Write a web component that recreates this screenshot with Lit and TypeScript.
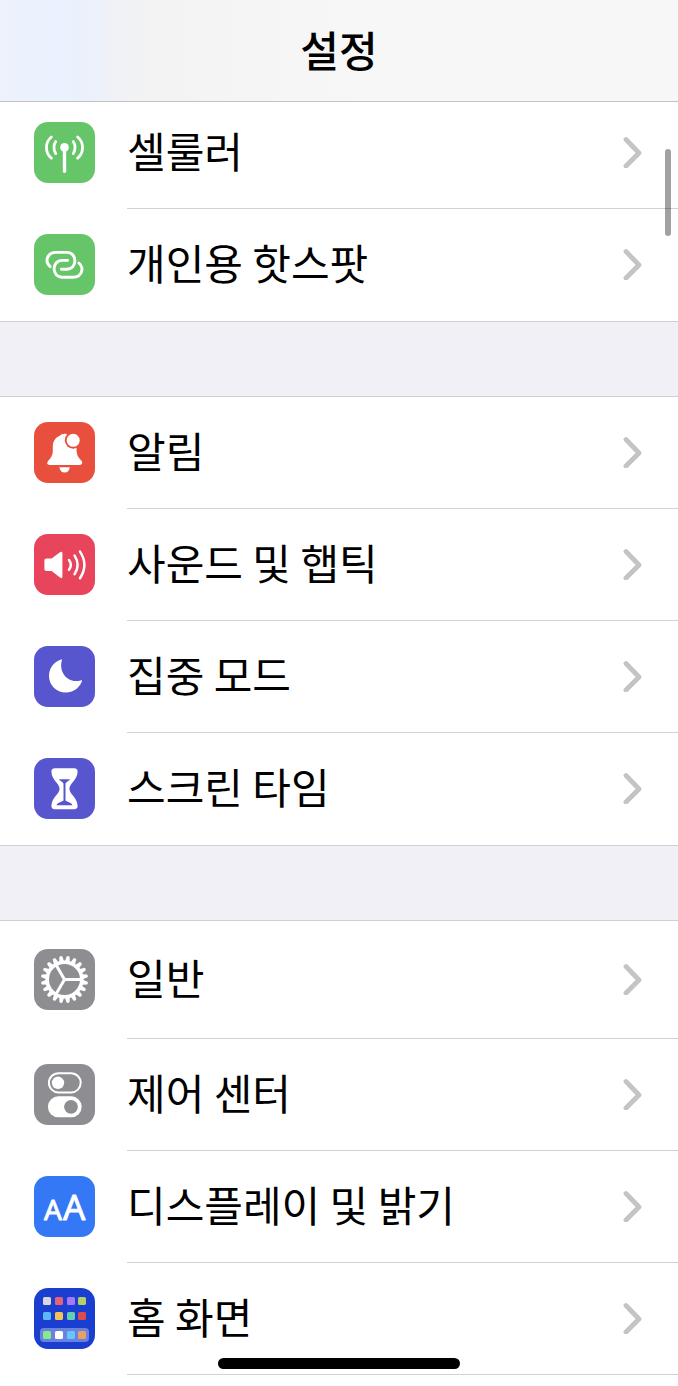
import { LitElement, html, svg, css, type SVGTemplateResult } from "lit";
import { customElement, property } from "lit/decorators.js";

type IconName =
  | "cellular" | "hotspot" | "bell" | "sound" | "moon"
  | "hourglass" | "gear" | "toggles" | "display" | "home";

interface Item {
  icon: IconName;
  label: string;
  tall?: boolean;
}

const GROUPS: Item[][] = [
  [
    { icon: "cellular", label: "셀룰러" },
    { icon: "hotspot", label: "개인용 핫스팟" },
  ],
  [
    { icon: "bell", label: "알림" },
    { icon: "sound", label: "사운드 및 햅틱" },
    { icon: "moon", label: "집중 모드" },
    { icon: "hourglass", label: "스크린 타임" },
  ],
  [
    { icon: "gear", label: "일반", tall: true },
    { icon: "toggles", label: "제어 센터" },
    { icon: "display", label: "디스플레이 및 밝기" },
    { icon: "home", label: "홈 화면" },
  ],
];

const TEETH = Array.from({ length: 20 }, (_, i) => i * 18 + 9);
const SPOKES = [0, 120, 240];

const APP_COLORS = [
  ["#d5d9dc", "#e4637a", "#a678fa", "#b2d068"],
  ["#5cb6fa", "#f2c457", "#66ceb0", "#db4d4d"],
  ["#84ea8a", "#ffffff", "#66c8fa", "#e9a063"],
];
const APP_X = [9, 21, 33, 44];
const APP_Y = [9, 24, 43];

const GLYPHS: Record<IconName, SVGTemplateResult> = {
  cellular: svg`
    <g fill="none" stroke="#fff" stroke-width="2.8" stroke-linecap="round">
      <path d="M30.5 26V49.3" stroke-width="3.4"/>
      <path d="M21.7 19.6C19.4 22.6 19.4 28.6 21.7 31.6M39.3 19.6C41.6 22.6 41.6 28.6 39.3 31.6"/>
      <path d="M17.4 15C10.8 20.2 10.8 31 17.4 36.2M43.6 15C50.2 20.2 50.2 31 43.6 36.2"/>
    </g>
    <circle cx="30.5" cy="25.4" r="4.3" fill="#fff"/>`,
  hotspot: svg`
    <g fill="none" stroke="#fff" stroke-width="2.9" stroke-linecap="round">
      <path d="M16.2 32.6C9.8 27 14 18.4 21.6 18.4H32.8C43.6 18.4 43.6 35.2 32.8 35.2H27.4"/>
      <path d="M44.8 29C51.2 34.6 47 43.2 39.4 43.2H28.2C17.4 43.2 17.4 26.4 28.2 26.4H33.6"/>
    </g>`,
  bell: svg`
    <path fill="#fff" d="M30 12C28 11.6 26.6 12.4 26 13.8C20.8 15.6 18.8 20 18.8 25V29C18.8 33.4 17 35.6 14.4 38.6C12.4 41 13.2 43 15.6 43H45.8C48.4 43 49 40.8 47.2 38.6C44.8 35.8 42.8 33.6 42.6 29L42.4 24L34 12.6C33 11.8 31.4 11.6 30 12Z"/>
    <circle cx="39.2" cy="18.3" r="8.4" fill="#e8503d"/>
    <circle cx="39.2" cy="18.3" r="6.5" fill="#fff"/>
    <path fill="#fff" d="M25.4 45.2H35.8C35.4 48.6 33.4 50.6 30.6 50.6S25.8 48.6 25.4 45.2Z"/>`,
  sound: svg`
    <path fill="#fff" d="M12.6 24.6H17.6L26 18.2C27.4 17.2 28.4 17.6 28.4 19V42.8C28.4 44.4 27.4 44.6 26 43.6L17.6 37H12.6C11.2 37 10.4 36.2 10.4 34.8V26.8C10.4 25.4 11.2 24.6 12.6 24.6Z"/>
    <g fill="none" stroke="#fff" stroke-width="2.5" stroke-linecap="round">
      <path d="M35 26Q38.6 30.8 35 35.8"/>
      <path d="M40.6 21.6Q46.6 30.8 40.6 40.2"/>
      <path d="M46 17.6Q54.8 30.8 46 44.2"/>
    </g>`,
  moon: svg`
    <path fill="#fff" d="M26.8 13.6C27.8 13.2 28.2 13.8 27.8 14.8C24.6 26 33.6 38 46.6 34.4C47.8 34 48.4 34.4 47.8 35.6C45.2 42.4 39 46.6 31.8 46.6C22.4 46.6 15 39.2 15 30C15 22.4 19.8 16.2 26.8 13.6Z"/>`,
  hourglass: svg`
    <path fill="#fff" d="M20.8 10.3H40.2C42.4 10.3 43.8 11.6 43.6 13.8C43.2 22.4 35.4 25.6 35.4 30.8S43.2 39.2 43.6 47.8C43.8 50 42.4 51.3 40.2 51.3H20.8C18.6 51.3 17.2 50 17.4 47.8C17.8 39.2 25.6 36 25.6 30.8S17.8 22.4 17.4 13.8C17.2 11.6 18.6 10.3 20.8 10.3Z"/>
    <path fill="#5856ce" d="M25 21.2H36C35.4 22.6 32.6 23.8 31.5 25.4V42.6C33.4 44.2 37.8 44.6 38.4 47.2H22.6C23.2 44.6 27.6 44.2 29.5 42.6V25.4C28.4 23.8 25.6 22.6 25 21.2Z"/>`,
  gear: svg`
    <circle cx="30.5" cy="30.5" r="17.3" fill="none" stroke="#fff" stroke-width="3.6"/>
    <g fill="#fff">
      ${TEETH.map((a) => svg`<path transform=${`rotate(${a} 30.5 30.5)`} d="M28 12.6L29 7.4Q30.5 6.2 32 7.4L33 12.6Z"/>`)}
    </g>
    <g stroke="#fff" stroke-width="3">
      ${SPOKES.map((a) => svg`<path transform=${`rotate(${a} 30.5 30.5)`} d="M30.5 30.5H47"/>`)}
    </g>`,
  toggles: svg`
    <rect x="14.9" y="9.2" width="31.8" height="19.2" rx="9.6" fill="none" stroke="#fff" stroke-width="2"/>
    <circle cx="24" cy="18.8" r="6.2" fill="#fff"/>
    <rect x="13.9" y="32.3" width="33.8" height="21" rx="10.5" fill="#fff"/>
    <circle cx="37" cy="42.8" r="6.9" fill="#8e8d92"/>`,
  display: svg`
    <g fill="#fff" stroke="#fff" stroke-width="0.8" stroke-linejoin="round" font-family="Noto Sans, sans-serif">
      <text x="10" y="44" font-size="28">A</text>
      <text x="29" y="44" font-size="35">A</text>
    </g>`,
  home: svg`
    <rect x="6" y="40" width="49" height="14" rx="4" fill="#fff" opacity=".35"/>
    ${APP_COLORS.map((row, r) =>
      row.map((c, i) => svg`<rect x=${APP_X[i]} y=${APP_Y[r]} width="8" height="8" rx="1.6" fill=${c}/>`)
    )}`,
};

@customElement("settings-row")
export class SettingsRow extends LitElement {
  @property() icon: IconName = "gear";
  @property() label = "";
  @property({ type: Boolean, reflect: true }) tall = false;

  static styles = css`
    :host {
      display: block;
    }
    .row {
      display: flex;
      align-items: center;
      gap: 32px;
      height: 112px;
      padding-left: 34px;
      color: #000;
      text-decoration: none;
    }
    :host([tall]) .row {
      height: 118px;
    }
    .tile {
      flex: none;
      display: block;
      width: 61px;
      height: 61px;
      margin-bottom: 2px;
      border-radius: 14px;
    }
    .cellular, .hotspot { background: #66c569; }
    .bell { background: #e8503d; }
    .sound { background: #e8445c; }
    .moon, .hourglass { background: #5856ce; }
    .gear, .toggles { background: #8e8d92; }
    .display { background: #3478f6; }
    .home { background: #1a3fd0; }
    .body {
      flex: 1;
      min-width: 0;
      align-self: stretch;
      box-sizing: border-box;
      display: flex;
      align-items: center;
      justify-content: space-between;
      padding-right: 36px;
      border-bottom: 1px solid #d2d2d4;
    }
    :host([data-last]) .body {
      border-bottom-color: transparent;
    }
    .label {
      padding-bottom: 6px;
      font-size: 42px;
      line-height: 60px;
      white-space: nowrap;
    }
    .chevron {
      flex: none;
      display: block;
      width: 20px;
      height: 32px;
      margin-bottom: 2px;
    }
  `;

  render() {
    return html`
      <a class="row" href="#">
        <svg class="tile ${this.icon}" viewBox="0 0 61 61" aria-hidden="true">${GLYPHS[this.icon]}</svg>
        <span class="body">
          <span class="label">${this.label}</span>
          <svg class="chevron" viewBox="0 0 20 32" aria-hidden="true">
            <path d="M4 3.5L17 17L4 30" fill="none" stroke="#c4c4c6" stroke-width="4.8" stroke-linecap="round" stroke-linejoin="round"/>
          </svg>
        </span>
      </a>
    `;
  }
}

@customElement("app-root")
export class AppRoot extends LitElement {
  static styles = css`
    :host {
      display: flex;
      flex-direction: column;
      min-height: 100vh;
      background: #fff;
      font-family: "Noto Sans CJK KR", sans-serif;
      color: #000;
    }
    .bar {
      position: sticky;
      top: 0;
      z-index: 1;
      box-sizing: border-box;
      height: 102px;
      display: flex;
      align-items: center;
      justify-content: center;
      border-bottom: 1px solid #c3c3c5;
      background: linear-gradient(90deg, #edf2fc 0, #e9f2fe 9%, #ebf1fb 13%, #f1f2f5 18%, #f3f3f3 24%, #f7f7f7 52%, #f7f7f7 100%);
    }
    .title {
      margin: 0;
      padding-bottom: 4px;
      font-size: 42px;
      line-height: 60px;
      font-weight: 500;
    }
    .list {
      flex: 1;
      display: flex;
      flex-direction: column;
      gap: 74px;
      margin-top: -6px;
      background: #f0f0f6;
    }
    .group {
      background: #fff;
      border-top: 1px solid #d0d0d4;
      border-bottom: 1px solid #d0d0d4;
    }
    .group:last-child {
      flex: 1;
      border-bottom: 0;
    }
    .scroll {
      position: fixed;
      z-index: 2;
      top: 149px;
      right: 7px;
      width: 6px;
      height: 87px;
      border-radius: 3px;
      background: rgba(0, 0, 0, 0.37);
    }
    .indicator {
      position: fixed;
      z-index: 2;
      bottom: 17px;
      left: 50%;
      width: 242px;
      height: 11px;
      border-radius: 6px;
      background: #000;
      transform: translateX(-50%);
    }
  `;

  render() {
    return html`
      <header class="bar"><h1 class="title">설정</h1></header>
      <main class="list">
        ${GROUPS.map(
          (items, g) => html`
            <section class="group">
              ${items.map(
                (it, i) => html`<settings-row
                  .icon=${it.icon}
                  .label=${it.label}
                  ?tall=${!!it.tall}
                  ?data-last=${g < GROUPS.length - 1 && i === items.length - 1}
                ></settings-row>`
              )}
            </section>
          `
        )}
      </main>
      <div class="scroll"></div>
      <div class="indicator"></div>
    `;
  }
}
